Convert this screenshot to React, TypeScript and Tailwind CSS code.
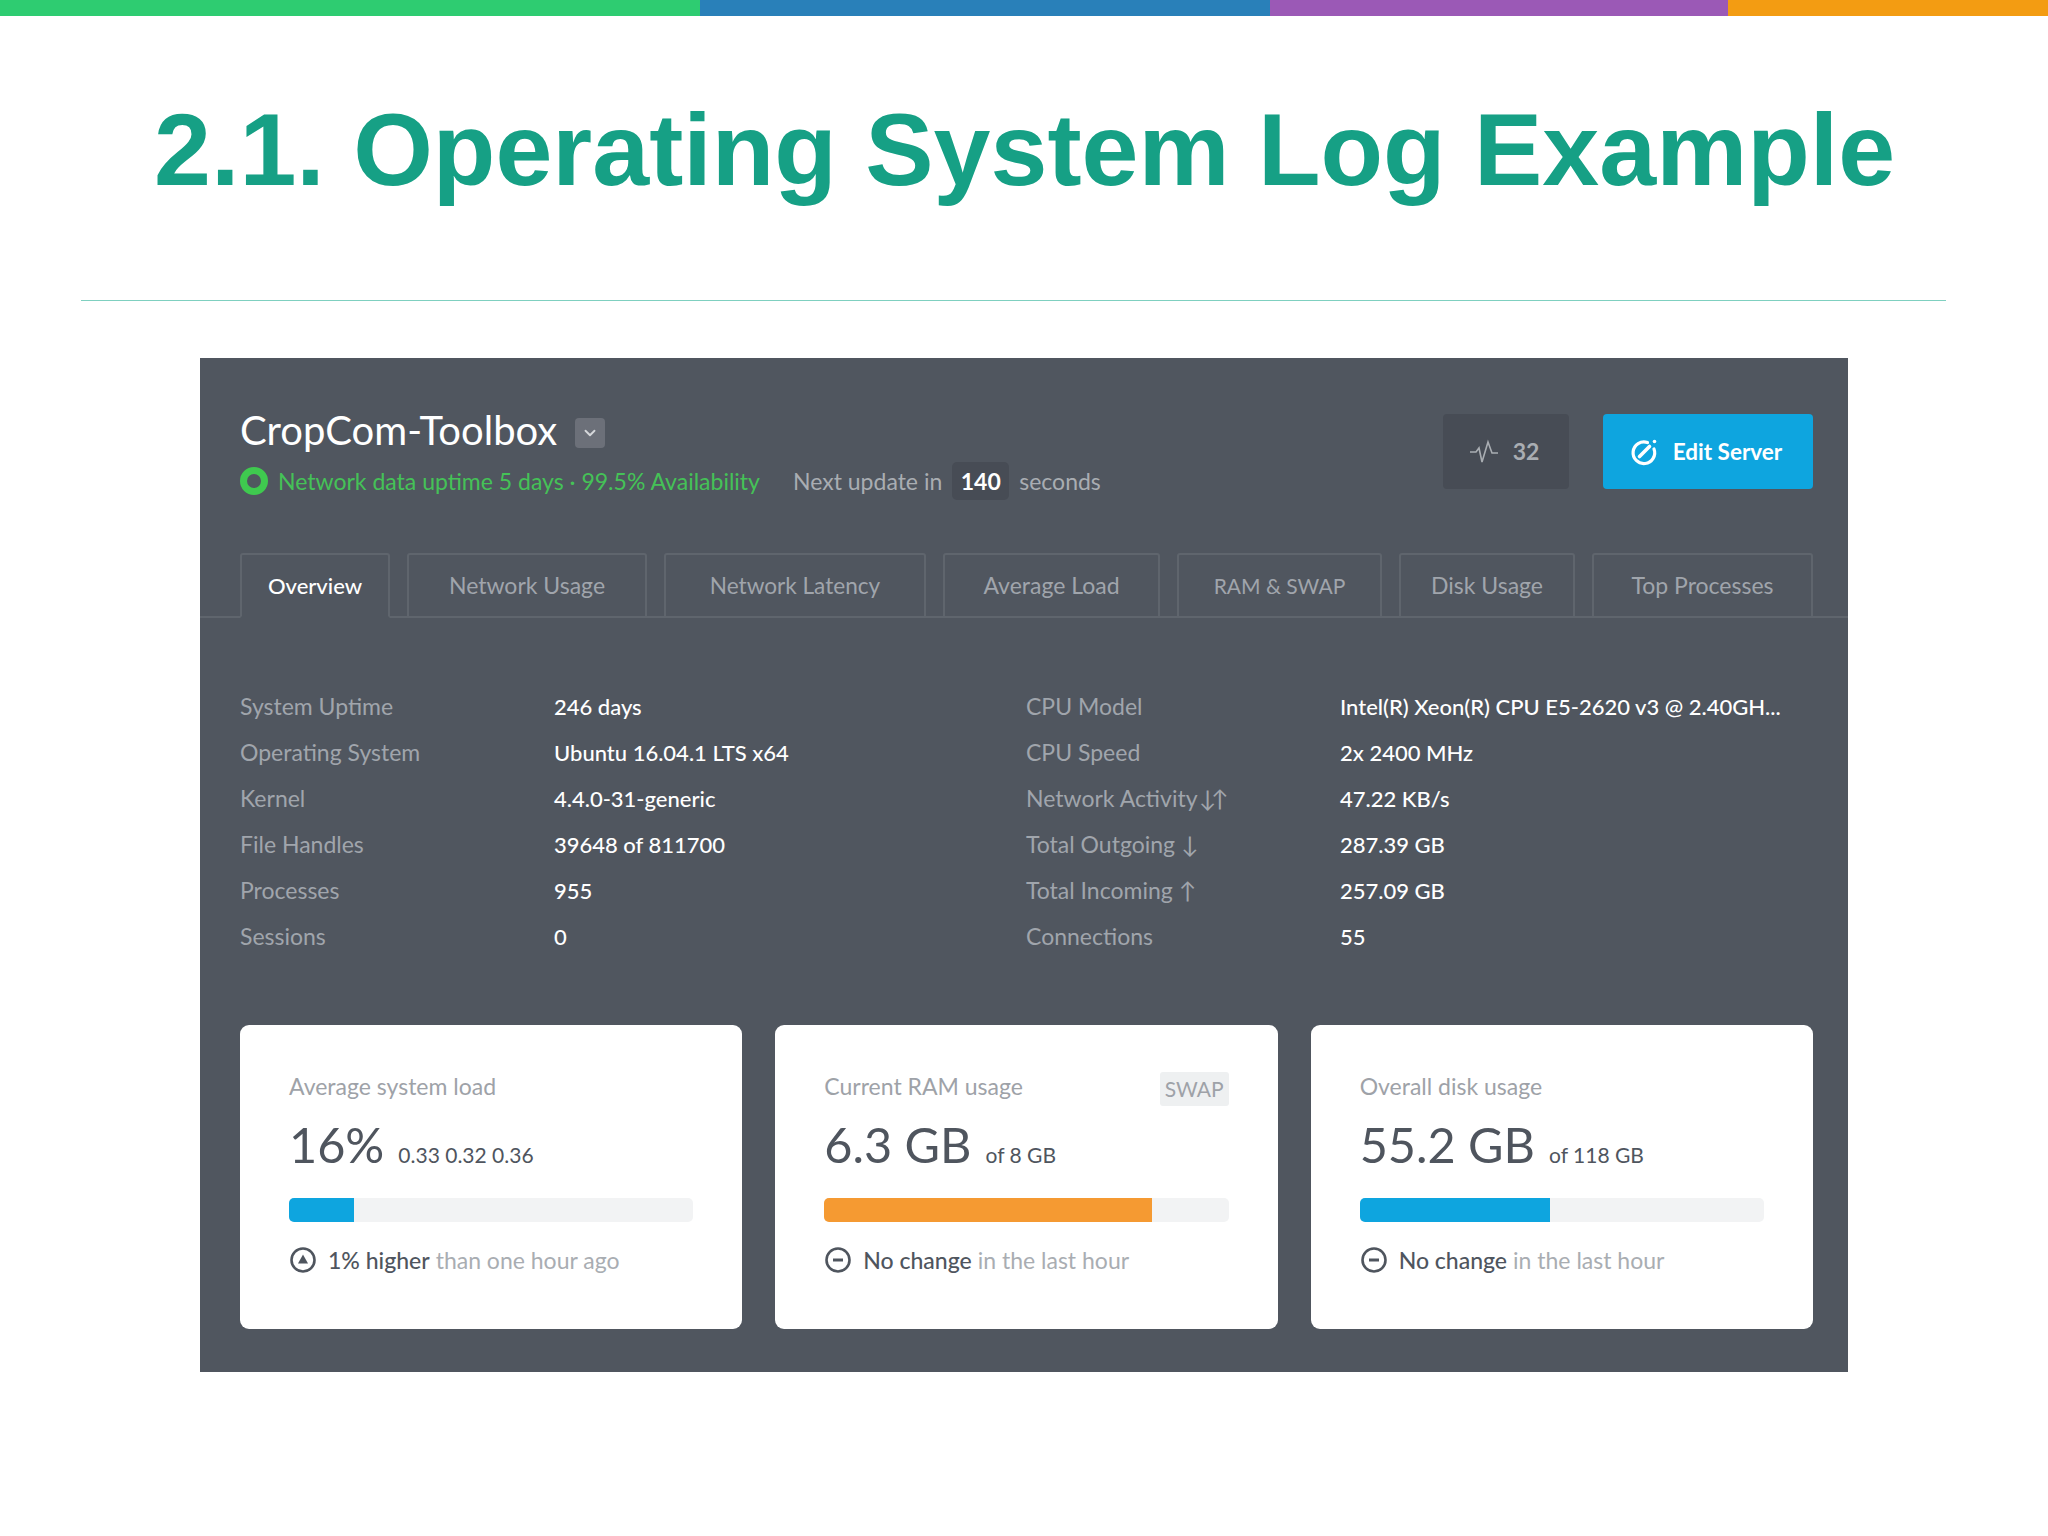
import type { ReactNode } from "react";
import { ChevronDown } from "lucide-react";

const leftRows: [string, ReactNode][] = [
  ["System Uptime", "246 days"],
  ["Operating System", "Ubuntu 16.04.1 LTS x64"],
  ["Kernel", "4.4.0-31-generic"],
  ["File Handles", "39648 of 811700"],
  ["Processes", "955"],
  ["Sessions", "0"],
];

const rightRows: [ReactNode, ReactNode][] = [
  ["CPU Model", "Intel(R) Xeon(R) CPU E5-2620 v3 @ 2.40GH..."],
  ["CPU Speed", "2x 2400 MHz"],
  [
    <>
      Network Activity <span className="ml-[-4px] tracking-[-5px]">↓↑</span>
    </>,
    "47.22 KB/s",
  ],
  ["Total Outgoing ↓", "287.39 GB"],
  ["Total Incoming ↑", "257.09 GB"],
  ["Connections", "55"],
];

const tabs = [
  { name: "Overview", w: "w-[150px] text-[22px]" },
  { name: "Network Usage", w: "w-[240px] text-[23px]" },
  { name: "Network Latency", w: "w-[262px] text-[22.6px]" },
  { name: "Average Load", w: "w-[217px] text-[23px]" },
  { name: "RAM & SWAP", w: "w-[205px] text-[21px]" },
  { name: "Disk Usage", w: "w-[176px] text-[23px]" },
  { name: "Top Processes", w: "w-[221px] text-[23px]" },
];

const InfoRows = ({ rows }: { rows: [ReactNode, ReactNode][] }) => (
  <div className="flex flex-col">
    {rows.map(([label, value], i) => (
      <div key={i} className="flex h-[46px] items-center text-[23px]">
        <span className="w-[314px] text-[#a0a5ac]">{label}</span>
        <span className="text-[22px] font-medium text-white">{value}</span>
      </div>
    ))}
  </div>
);

const UpIcon = () => (
  <svg width="28" height="28" viewBox="0 0 28 28" fill="none">
    <circle cx="14" cy="14" r="11.5" stroke="#4f555e" strokeWidth="2.6" />
    <path d="M14 8.5 L19 17.5 H9 Z" fill="#4f555e" />
  </svg>
);

const MinusIcon = () => (
  <svg width="28" height="28" viewBox="0 0 28 28" fill="none">
    <circle cx="14" cy="14" r="11.5" stroke="#4f555e" strokeWidth="2.6" />
    <path d="M9 14 H19" stroke="#4f555e" strokeWidth="3" />
  </svg>
);

const Card = ({
  title,
  big,
  small,
  fill,
  fillColor,
  icon,
  strong,
  rest,
  badge,
}: {
  title: string;
  big: string;
  small: string;
  fill: string;
  fillColor: string;
  icon: ReactNode;
  strong: string;
  rest: string;
  badge?: boolean;
}) => (
  <div className="flex h-[304px] flex-1 flex-col rounded-[9px] bg-white px-[49px] pt-[45px]">
    <div className="flex h-[32px] items-center justify-between">
      <span className="text-[23px] text-[#9ea2a8]">{title}</span>
      {badge && (
        <span className="mt-[6px] flex h-[34px] w-[69px] items-center justify-center rounded-[3px] bg-[#eef0f1] text-[21px] text-[#9ea2a8]">
          SWAP
        </span>
      )}
    </div>
    <div className="mt-[12px] flex h-[60px] items-baseline gap-[14px] text-[#4f555e]">
      <span className="text-[48.6px] leading-[60px]">{big}</span>
      <span className="text-[21px]">{small}</span>
    </div>
    <div className="mt-[24px] h-[24px] w-full overflow-hidden rounded-[5px] bg-[#f2f3f4]">
      <div className={`h-full ${fill} ${fillColor}`} />
    </div>
    <div className="mt-[24px] flex h-[28px] items-center text-[23px]">
      {icon}
      <span className="ml-[11px] font-medium text-[#4f555e]">{strong}</span>
      <span className="ml-[6px] text-[#a9adb2]">{rest}</span>
    </div>
  </div>
);

export default function App() {
  return (
    <div className="min-h-[1536px] w-[2048px] bg-white font-['Lato',sans-serif]">
      <div className="flex h-4 w-full">
        <div className="w-[700px] bg-[#2ecc71]" />
        <div className="w-[570px] bg-[#2980b9]" />
        <div className="w-[458px] bg-[#9b59b6]" />
        <div className="flex-1 bg-[#f39c12]" />
      </div>

      <h1 className="mt-[74px] pl-[154px] font-['Liberation_Sans',sans-serif] text-[102.4px] leading-[120px] font-bold text-[#16a085]">
        2.1. Operating System Log Example
      </h1>

      <div className="mt-[90px] ml-[81px] h-px w-[1865px] bg-[#7fd0c0]" />

      <div className="mt-[57px] ml-[200px] flex h-[1014px] w-[1648px] flex-col bg-[#50565f]">
        <div className="flex h-[195px] justify-between pt-[54px] pr-[35px] pl-[40px]">
          <div>
            <div className="flex h-[36px] items-center">
              <span className="text-[40px] text-white">CropCom-Toolbox</span>
              <span className="mt-[6px] ml-[18px] flex h-[30px] w-[30px] items-center justify-center rounded-[4px] bg-[#6c7079]">
                <ChevronDown size={18} strokeWidth={2.5} className="text-[#d5d7da]" />
              </span>
            </div>
            <div className="mt-[13px] flex h-[40px] items-center text-[23px]">
              <span className="h-[28px] w-[28px] rounded-full border-[7px] border-[#3fc94f] bg-[#50565f]" />
              <span className="ml-[10px] w-[515px] text-[#45c257]">
                Network data uptime 5 days · 99.5% Availability
              </span>
              <span className="text-[#a9adb2]">Next update in</span>
              <span className="mx-[10px] flex h-[38px] w-[57px] items-center justify-center rounded-[5px] bg-[#474c55] font-bold text-white">
                140
              </span>
              <span className="text-[#a9adb2]">seconds</span>
            </div>
          </div>
          <div className="mt-[2px] flex h-[75px] gap-[34px]">
            <div className="flex w-[126px] items-center justify-center gap-[14px] rounded-[4px] bg-[#474c55] pr-[4px] text-[23px] font-bold text-[#a9adb2]">
              <svg width="30" height="26" viewBox="0 0 30 26" fill="none" stroke="currentColor" strokeWidth="1.6">
                <path d="M1 13 H7 L10 9 L13 23 L19 3 L23 14 H29" />
              </svg>
              32
            </div>
            <div className="flex w-[210px] items-center justify-center gap-[14px] rounded-[4px] bg-[#0ea5df] pr-[5px] text-[22.5px] font-bold text-white">
              <svg width="30" height="30" viewBox="0 0 30 30" fill="none">
                <path
                  d="M18.5 5.6 A10.8 10.8 0 1 0 25 12"
                  stroke="white"
                  strokeWidth="3.2"
                  strokeLinecap="round"
                />
                <path d="M10.5 19.5 L20.5 9.5" stroke="white" strokeWidth="3.6" strokeLinecap="round" />
                <circle cx="25.5" cy="4.5" r="1.8" fill="white" />
              </svg>
              Edit Server
            </div>
          </div>
        </div>

        <div className="flex h-[65px] gap-[17px] border-b-2 border-[#5f656d] pl-[40px]">
          {tabs.map((tab, i) => (
            <div
              key={tab.name}
              className={`flex h-[65px] items-center justify-center rounded-t-[3px] border-2 ${tab.w} ${
                i === 0
                  ? "border-[#5f656d] border-b-[#50565f] font-medium text-white"
                  : "border-[#5f656d] text-[#a0a5ac]"
              }`}
            >
              {tab.name}
            </div>
          ))}
        </div>

        <div className="mt-[65px] flex pl-[40px]">
          <div className="w-[786px]">
            <InfoRows rows={leftRows} />
          </div>
          <InfoRows rows={rightRows} />
        </div>

        <div className="mt-[66px] flex gap-[33px] pr-[35px] pl-[40px]">
          <Card
            title="Average system load"
            big="16%"
            small="0.33 0.32 0.36"
            fill="w-[16%]"
            fillColor="bg-[#0ea5df]"
            icon={<UpIcon />}
            strong="1% higher"
            rest="than one hour ago"
          />
          <Card
            title="Current RAM usage"
            big="6.3 GB"
            small="of 8 GB"
            fill="w-[81%]"
            fillColor="bg-[#f59a32]"
            icon={<MinusIcon />}
            strong="No change"
            rest="in the last hour"
            badge
          />
          <Card
            title="Overall disk usage"
            big="55.2 GB"
            small="of 118 GB"
            fill="w-[47%]"
            fillColor="bg-[#0ea5df]"
            icon={<MinusIcon />}
            strong="No change"
            rest="in the last hour"
          />
        </div>
      </div>
    </div>
  );
}
